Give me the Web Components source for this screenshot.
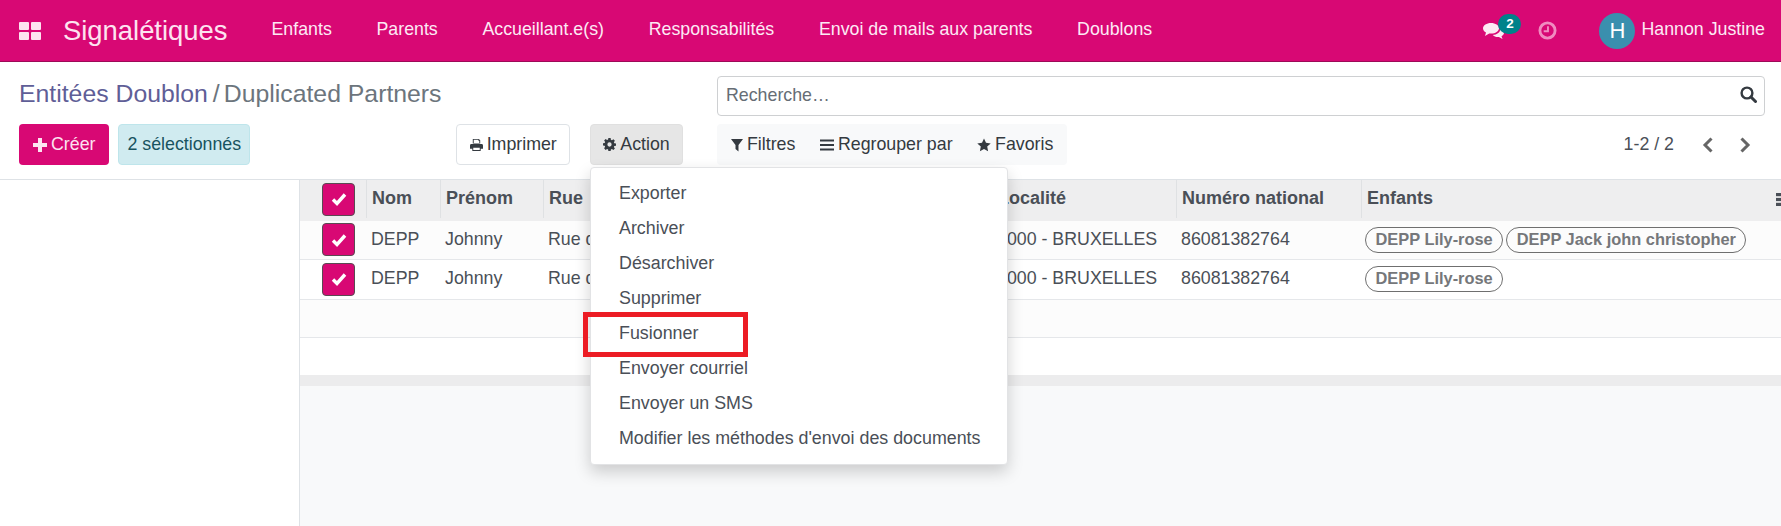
<!DOCTYPE html>
<html lang="fr"><head><meta charset="utf-8"><title>Signalétiques</title>
<style>
html,body{margin:0;padding:0;height:526px;overflow:hidden;background:#fff}
body{font:17.8px/1.3 "Liberation Sans",Arial,sans-serif;color:#4a4f57;width:1781px;position:relative}
</style></head><body>
<x-app></x-app>
<script>
const ICONS={
grid:'<svg viewBox="0 0 22 18" width="22" height="18"><g fill="currentColor"><rect width="10" height="8" rx="1"/><rect x="12" width="10" height="8" rx="1"/><rect y="10" width="10" height="8" rx="1"/><rect x="12" y="10" width="10" height="8" rx="1"/></g></svg>',
plus:'<svg viewBox="0 0 14 14" width="14" height="14"><path fill="currentColor" d="M5 0h4v5h5v4H9v5H5V9H0V5h5z"/></svg>',
print:'<svg viewBox="0 0 14 14" width="13" height="13"><path fill="currentColor" d="M3 1h6.5L11 2.5V6H3zM4 2v3.500h6V3H9V2zM1.500 6.500h11A1.500 1.500 0 0 1 14 8v3.500h-2.500V14h-9v-2.500H0V8a1.500 1.500 0 0 1 1.500-1.500zM3.500 10.500V13h7v-2.500z"/></svg>',
cog:'<svg viewBox="0 0 14 14" width="13" height="13"><path fill="currentColor" fill-rule="evenodd" d="M5.800 0h2.400l.3 1.900 1.100.5L11.200 1.300 12.800 3l-1.100 1.500.5 1.200 1.800.3v2.300l-1.800.3-.5 1.200 1.100 1.500-1.600 1.700-1.600-1.100-1.100.5-.3 1.900H5.800l-.3-1.900-1.100-.5-1.600 1.100L1.200 11l1.100-1.500-.5-1.200L0 8V5.700l1.800-.3.5-1.200L1.200 2.700 2.800 1l1.600 1.100 1.100-.5zM7 4.700a2.300 2.300 0 1 0 0 4.600 2.300 2.300 0 0 0 0-4.600z"/></svg>',
filter:'<svg viewBox="0 0 12 14" width="12" height="14"><path fill="currentColor" d="M0 1h12L7.500 7v6.500L4.500 11V7z"/></svg>',
bars:'<svg viewBox="0 0 14 14" width="14" height="14"><path fill="currentColor" d="M0 1.500h14v2H0zM0 6h14v2H0zM0 10.500h14v2H0z"/></svg>',
star:'<svg viewBox="0 0 14 14" width="14" height="14"><path fill="currentColor" d="M7 .5l2 4.300 4.700.6-3.500 3.200.9 4.700L7 11l-4.100 2.300.9-4.700L.3 5.400 5 4.800z"/></svg>',
search:'<svg viewBox="0 0 17 17" width="17" height="17"><circle cx="7" cy="7" r="5.400" fill="none" stroke="currentColor" stroke-width="2.400"/><path d="M11 11L15.500 15.500" stroke="currentColor" stroke-width="3" stroke-linecap="round"/></svg>',
left:'<svg viewBox="0 0 12 16" width="12" height="16"><path d="M9.500 1.500L3 8l6.500 6.500" fill="none" stroke="currentColor" stroke-width="3"/></svg>',
right:'<svg viewBox="0 0 12 16" width="12" height="16"><path d="M2.500 1.500L9 8l-6.500 6.500" fill="none" stroke="currentColor" stroke-width="3"/></svg>',
check:'<svg viewBox="0 0 16 14" width="16" height="14"><path d="M2 7.500l4 4L14 2.500" fill="none" stroke="currentColor" stroke-width="3.400"/></svg>',
chat:'<svg viewBox="0 0 21 17" width="21" height="17"><path fill="currentColor" d="M17 5.500c2.500.8 4 2.300 4 4.200 0 1.500-1 2.700-2.500 3.500l1 2.800-3.600-2.100c-2.700.2-5-.6-6.200-2 4.300-.1 8-2.500 7.300-6.400z"/><path fill="currentColor" d="M8 0c4.400 0 8 2.300 8 5.300s-3.600 5.300-8 5.300c-.6 0-1.200 0-1.800-.1L2 13l1-3.400C1.200 8.600 0 7 0 5.300 0 2.300 3.600 0 8 0z"/></svg>',
clock:'<svg viewBox="0 0 20 20" width="19" height="19"><circle cx="10" cy="10" r="8" fill="none" stroke="currentColor" stroke-width="3"/><path d="M10.500 5.500v5.300H6" fill="none" stroke="currentColor" stroke-width="2"/></svg>',
dots:'<svg viewBox="0 0 5 13" width="5" height="13"><g fill="currentColor"><rect width="5" height="3.200"/><rect y="4.900" width="5" height="3.200"/><rect y="9.800" width="5" height="3.200"/></g></svg>'
};
class XIcon extends HTMLElement{
  constructor(){super();this.attachShadow({mode:'open'}).innerHTML='<style>:host{display:inline-flex;align-items:center;justify-content:center;line-height:0}</style>'+(ICONS[this.getAttribute('name')]||'');}
}
customElements.define('x-icon',XIcon);

class XNavbar extends HTMLElement{
  constructor(){super();this.attachShadow({mode:'open'}).innerHTML=`<style>
  :host{display:flex;align-items:center;height:61px;background:#d80874;border-bottom:1px solid #9d0a58;color:#fdeaf4;font-size:17.8px;box-sizing:content-box}
  .apps{margin-left:19px;color:#fde3f0}
  .brand{margin-left:22px;margin-right:22px;font-size:27.4px;color:#fde3f0}
  nav{display:flex;gap:44.700px;margin-left:0;margin-right:auto;padding-left:22px;padding-bottom:2px}
  .right{display:flex;align-items:center;margin-right:16px}
  .chat{position:relative;width:21px;height:17px;display:block;margin-right:34px;margin-top:2px}
  .badge{position:absolute;left:15px;top:-9px;width:23px;height:20px;border-radius:10px;background:#00828a;color:#fff;font:bold 13.5px/19px "Liberation Sans",sans-serif;text-align:center}
  .clock{color:#f08cc0;margin-right:42px}
  .av{width:36px;height:36px;border-radius:50%;background:#3a8fae;color:#fff;font-size:22px;line-height:36px;text-align:center;margin-right:6px}
  .name{padding-bottom:1px}
  </style>
  <x-icon class="apps" name="grid"></x-icon><span class="brand">Signalétiques</span>
  <nav><span>Enfants</span><span>Parents</span><span>Accueillant.e(s)</span><span>Responsabilités</span><span>Envoi de mails aux parents</span><span>Doublons</span></nav>
  <div class="right"><span class="chat"><x-icon name="chat"></x-icon><span class="badge">2</span></span><x-icon class="clock" name="clock"></x-icon><span class="av">H</span><span class="name">Hannon Justine</span></div>`;}
}
customElements.define('x-navbar',XNavbar);

class XBtn extends HTMLElement{
  constructor(){super();this.attachShadow({mode:'open'}).innerHTML=`<style>
  :host{display:inline-flex;align-items:center;height:41px;box-sizing:border-box;border:1px solid transparent;border-radius:4px;padding:0 13px;gap:4px;white-space:nowrap;font-size:17.8px}
  :host([kind=primary]){background:#d80874;color:#fde3f0}
  :host([kind=info]){background:#d0ebf0;border-color:#bee5eb;color:#18535f;padding:0 8px}
  :host([kind=outline]){background:#fff;border-color:#dee2e6;color:#343a40;padding:0 12.500px}
  :host([kind=active]){background:#e6e6e6;border-color:#e0e0e0;color:#343a40;padding:0 12px}
  </style><slot></slot>`;}
}
customElements.define('x-btn',XBtn);

class XPanel extends HTMLElement{
  constructor(){super();this.attachShadow({mode:'open'}).innerHTML=`<style>
  :host{display:grid;grid-template-columns:698px 1048px;grid-template-rows:54px 55px;padding:14px 16px 0 19px;height:103px;border-bottom:1px solid #dee2e6;box-sizing:content-box;color:#343a40}
  .crumb{font-size:24.800px;align-self:center;white-space:nowrap;margin-bottom:17px}
  .crumb a{color:#5f5e97}.crumb i{font-style:normal;color:#6c757d;margin:0 4px 0 5px}.crumb span{color:#6c757d}
  .search{height:40px;box-sizing:border-box;border:1px solid #ced0d2;border-radius:4px;display:flex;align-items:center;padding:0 7px 0 8px;color:#666d75;justify-content:space-between}
  .search x-icon{color:#343a40;margin-top:-4px}
  .left{display:flex;align-items:center;height:41px;margin-top:-6px}
  .left .g1{margin-left:9px}.left .g2{margin-left:206px}.left .g3{margin-left:20px}
  .rightrow{display:flex;align-items:center;justify-content:space-between;height:41px;margin-top:-6px}
  .tools{display:flex;align-items:center;height:41px;background:#f8f9fa;border-radius:4px;width:350px;box-sizing:border-box;padding-left:14px;gap:24.500px;color:#343a40}
  .tools span{display:flex;align-items:center;gap:4px}
  .pager{display:flex;align-items:center;color:#4a4f57;margin-right:14px}
  .pager x-icon{color:#666}.pager .p{margin-left:28px}.pager .n{margin-left:25px}
  </style>
  <div class="crumb"><a>Entitées Doublon</a><i>/</i><span>Duplicated Partners</span></div>
  <div class="search"><span>Recherche…</span><x-icon name="search"></x-icon></div>
  <div class="left"><x-btn kind="primary"><x-icon name="plus"></x-icon>Créer</x-btn><x-btn class="g1" kind="info">2 sélectionnés</x-btn><x-btn class="g2" kind="outline"><x-icon name="print"></x-icon>Imprimer</x-btn><x-btn class="g3" kind="active"><x-icon name="cog"></x-icon>Action</x-btn></div>
  <div class="rightrow"><div class="tools"><span><x-icon name="filter"></x-icon>Filtres</span><span><x-icon name="bars"></x-icon>Regrouper par</span><span><x-icon name="star"></x-icon>Favoris</span></div>
  <div class="pager"><span>1-2 / 2</span><x-icon class="p" name="left"></x-icon><x-icon class="n" name="right"></x-icon></div></div>`;}
}
customElements.define('x-panel',XPanel);

class XCheck extends HTMLElement{
  constructor(){super();this.attachShadow({mode:'open'}).innerHTML=`<style>
  :host{display:flex;align-items:center;justify-content:center;width:33px;height:33px;box-sizing:border-box;background:#d80874;border:1px solid #5a4a52;border-radius:4px;color:#fff}
  </style><x-icon name="check"></x-icon>`;}
}
customElements.define('x-check',XCheck);

class XTag extends HTMLElement{
  constructor(){super();this.attachShadow({mode:'open'}).innerHTML=`<style>
  :host{display:inline-flex;align-items:center;height:26px;box-sizing:border-box;border:1px solid #6f6f6f;border-radius:13px;padding:0 9.500px;font-size:16.400px;font-weight:bold;color:#75777a;white-space:nowrap}
  </style><slot></slot>`;}
}
customElements.define('x-tag',XTag);

class XRow extends HTMLElement{
  constructor(){super();this.attachShadow({mode:'open'}).innerHTML=`<style>
  :host{display:grid;grid-template-columns:var(--cols);align-items:center;box-sizing:border-box;border-bottom:1px solid #e5e7ea;background:#fff;overflow:hidden;padding-bottom:1px}
  :host([alt]){background:#fcfcfc}
  :host([head]){background:#eeeeef;font-weight:bold;font-size:18px;border-bottom:0;color:#4a4f57;padding-bottom:3px;position:relative}
  </style><slot></slot>`;}
}
customElements.define('x-row',XRow);

class XCell extends HTMLElement{
  constructor(){super();this.attachShadow({mode:'open'}).innerHTML=`<style>
  :host{display:flex;align-items:center;min-width:0;white-space:nowrap;padding-left:5px;box-sizing:border-box;height:100%;overflow:hidden}
  :host([h]){border-left:1px solid #dfe1e3;height:38px}
  :host([chk]){padding-left:22px}
  :host([tags]){gap:3px;padding-left:4px}
  </style><slot></slot>`;}
}
customElements.define('x-cell',XCell);

class XTable extends HTMLElement{
  constructor(){super();this.attachShadow({mode:'open'}).innerHTML=`<style>
  :host{display:flex;flex-direction:column;--cols:66px 74px 103px 449px 184px 185px 420px;background:#f8f9fa;flex:1;min-width:0}
  .band{height:11px;background:#ececed;flex:none}
  .menu{position:absolute;right:0;top:13px;color:#4a4f57}
  x-row{flex:none}
  </style>
  <x-row head style="height:41px"><x-cell chk><x-check></x-check></x-cell><x-cell h>Nom</x-cell><x-cell h>Prénom</x-cell><x-cell h>Rue</x-cell><x-cell h>Localité</x-cell><x-cell h>Numéro national</x-cell><x-cell h>Enfants</x-cell><x-icon class="menu" name="dots"></x-icon></x-row>
  <x-row alt style="height:39px"><x-cell chk><x-check></x-check></x-cell><x-cell>DEPP</x-cell><x-cell>Johnny</x-cell><x-cell>Rue d</x-cell><x-cell>1000 - BRUXELLES</x-cell><x-cell>86081382764</x-cell><x-cell tags><x-tag>DEPP Lily-rose</x-tag><x-tag>DEPP Jack john christopher</x-tag></x-cell></x-row>
  <x-row style="height:40px"><x-cell chk><x-check></x-check></x-cell><x-cell>DEPP</x-cell><x-cell>Johnny</x-cell><x-cell>Rue d</x-cell><x-cell>1000 - BRUXELLES</x-cell><x-cell>86081382764</x-cell><x-cell tags><x-tag>DEPP Lily-rose</x-tag></x-cell></x-row>
  <x-row alt style="height:38px"></x-row>
  <x-row style="height:37px;border-bottom:0"></x-row>
  <div class="band"></div>`;}
}
customElements.define('x-table',XTable);

class XMenu extends HTMLElement{
  constructor(){super();this.attachShadow({mode:'open'}).innerHTML=`<style>
  :host{position:absolute;left:590px;top:167px;width:418px;height:298px;box-sizing:border-box;background:#fff;border:1px solid #e2e3e5;border-radius:4px;box-shadow:0 7px 16px rgba(0,0,0,.18);padding:8px 0;color:#4a4f57;display:block}
  div{height:35px;line-height:35px;padding-left:28px;white-space:nowrap;font-size:17.85px}
  </style>
  <div>Exporter</div><div>Archiver</div><div>Désarchiver</div><div>Supprimer</div><div>Fusionner</div><div>Envoyer courriel</div><div>Envoyer un SMS</div><div>Modifier les méthodes d'envoi des documents</div>`;}
}
customElements.define('x-menu',XMenu);

class XApp extends HTMLElement{
  constructor(){super();this.attachShadow({mode:'open'}).innerHTML=`<style>
  :host{display:flex;flex-direction:column;height:526px;position:relative}
  .body{display:flex;flex:1;min-height:0}
  .side{width:299px;border-right:1px solid #dee2e6;background:#fff;flex:none}
  .mark{position:absolute;left:583px;top:312px;width:165px;height:45px;box-sizing:border-box;border:5px solid #ec1c24;pointer-events:none}
  </style>
  <x-navbar></x-navbar><x-panel></x-panel>
  <div class="body"><div class="side"></div><x-table></x-table></div>
  <x-menu></x-menu><div class="mark"></div>`;}
}
customElements.define('x-app',XApp);
</script>
</body></html>
